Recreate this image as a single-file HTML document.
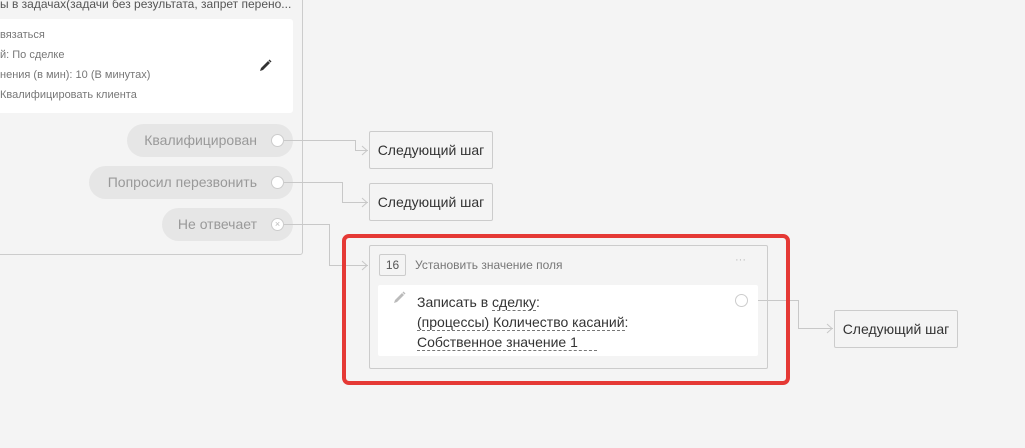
<html><head><style>
body{margin:0;width:1025px;height:448px;background:#f4f4f4;position:relative;overflow:hidden;font-family:"Liberation Sans","DejaVu Sans",sans-serif;}
.a{position:absolute;box-sizing:border-box}
.pill{background:#e6e6e6;border-radius:17px;color:#999;font-size:14px;line-height:33px;height:33px;padding-right:36px;text-align:right}
.circ{width:13px;height:13px;border-radius:50%;background:#fff;border:1px solid #ccc}
.ns{background:#f4f4f4;border:1px solid #ccc;border-radius:2px;font-size:14px;color:#333;text-align:center;line-height:36px}
.sm{font-size:11px;color:#777}
u{text-decoration:none;border-bottom:1px dashed #777}
</style></head><body>
<div class="a" style="left:-5px;top:-5px;width:308px;height:260px;border:1px solid #ccc;border-radius:3px;background:#f4f4f4"></div>
<div class="a" style="left:0;top:-3px;font-size:12px;color:#555;white-space:nowrap">ы в задачах(задачи без результата, запрет перено...</div>
<div class="a" style="left:-5px;top:19px;width:298px;height:94px;background:#fff;border-radius:3px"></div>
<div class="a sm" style="left:0;top:29px">вязаться</div>
<div class="a sm" style="left:0;top:49px">й: По сделке</div>
<div class="a sm" style="left:0;top:69px">нения (в мин): 10 (В минутах)</div>
<div class="a sm" style="left:0;top:89px">Квалифицировать клиента</div>
<svg class="a" style="left:259px;top:59px" width="13" height="13"><path d="M1 12l1-3 7-7 2 2-7 7z M9.5 1.5l1-1 2 2-1 1z" fill="#333"/></svg>
<div class="a pill" style="left:127px;top:124px;width:166px">Квалифицирован</div>
<div class="a pill" style="left:89px;top:166px;width:204px">Попросил перезвонить</div>
<div class="a pill" style="left:162px;top:208px;width:131px">Не отвечает</div>
<div class="a circ" style="left:271px;top:134px"></div>
<div class="a circ" style="left:271px;top:176px"></div>
<div class="a circ" style="left:271px;top:218px;font-size:9px;color:#bbb;line-height:11px;text-align:center">×</div>
<svg class="a" style="left:0;top:0" width="1025" height="448"><g fill="none" stroke="#c8c8c8" stroke-width="1">
<path d="M284 140.5H355.5V150.5H368M362 146l5 4.5-5 4.5"/>
<path d="M284 182.5H342.5V202.5H368M362 198l5 4.5-5 4.5"/>
<path d="M284 224.5H329.5V265.5H368M362 261l5 4.5-5 4.5"/>
<path d="M748 300.5H798.5V328.5H833M827 324l5 4.5-5 4.5"/></g></svg>
<div class="a ns" style="left:369px;top:131px;width:124px;height:38px">Следующий шаг</div>
<div class="a ns" style="left:369px;top:183px;width:124px;height:38px">Следующий шаг</div>
<div class="a ns" style="left:834px;top:310px;width:124px;height:38px">Следующий шаг</div>
<div class="a" style="left:342px;top:234px;width:448px;height:151px;border:4px solid #e53935;border-radius:7px"></div>
<div class="a" style="left:369px;top:245px;width:399px;height:124px;border:1px solid #ccc;border-radius:2px"></div>
<div class="a" style="left:379px;top:254px;width:27px;height:22px;border:1px solid #ccc;border-radius:2px;font-size:12px;color:#555;text-align:center;line-height:20px">16</div>
<div class="a" style="left:415px;top:258px;font-size:12px;color:#777">Установить значение поля</div>
<div class="a" style="left:735px;top:254px;font-size:11px;color:#bbb">···</div>
<div class="a" style="left:378px;top:285px;width:380px;height:71px;background:#fff;border-radius:2px"></div>
<svg class="a" style="left:393px;top:291px" width="13" height="13"><path d="M1 12l1-3 7-7 2 2-7 7z M9.5 1.5l1-1 2 2-1 1z" fill="#bbb"/></svg>
<div class="a" style="left:417px;top:292px;font-size:14px;color:#333;line-height:20px">Записать в <u>сделку</u>:<br><u>(процессы) Количество касаний</u>:<br><u>Собственное значение 1&nbsp;&nbsp;&nbsp;&nbsp;&nbsp;</u></div>
<div class="a circ" style="left:735px;top:294px"></div>
</body></html>
